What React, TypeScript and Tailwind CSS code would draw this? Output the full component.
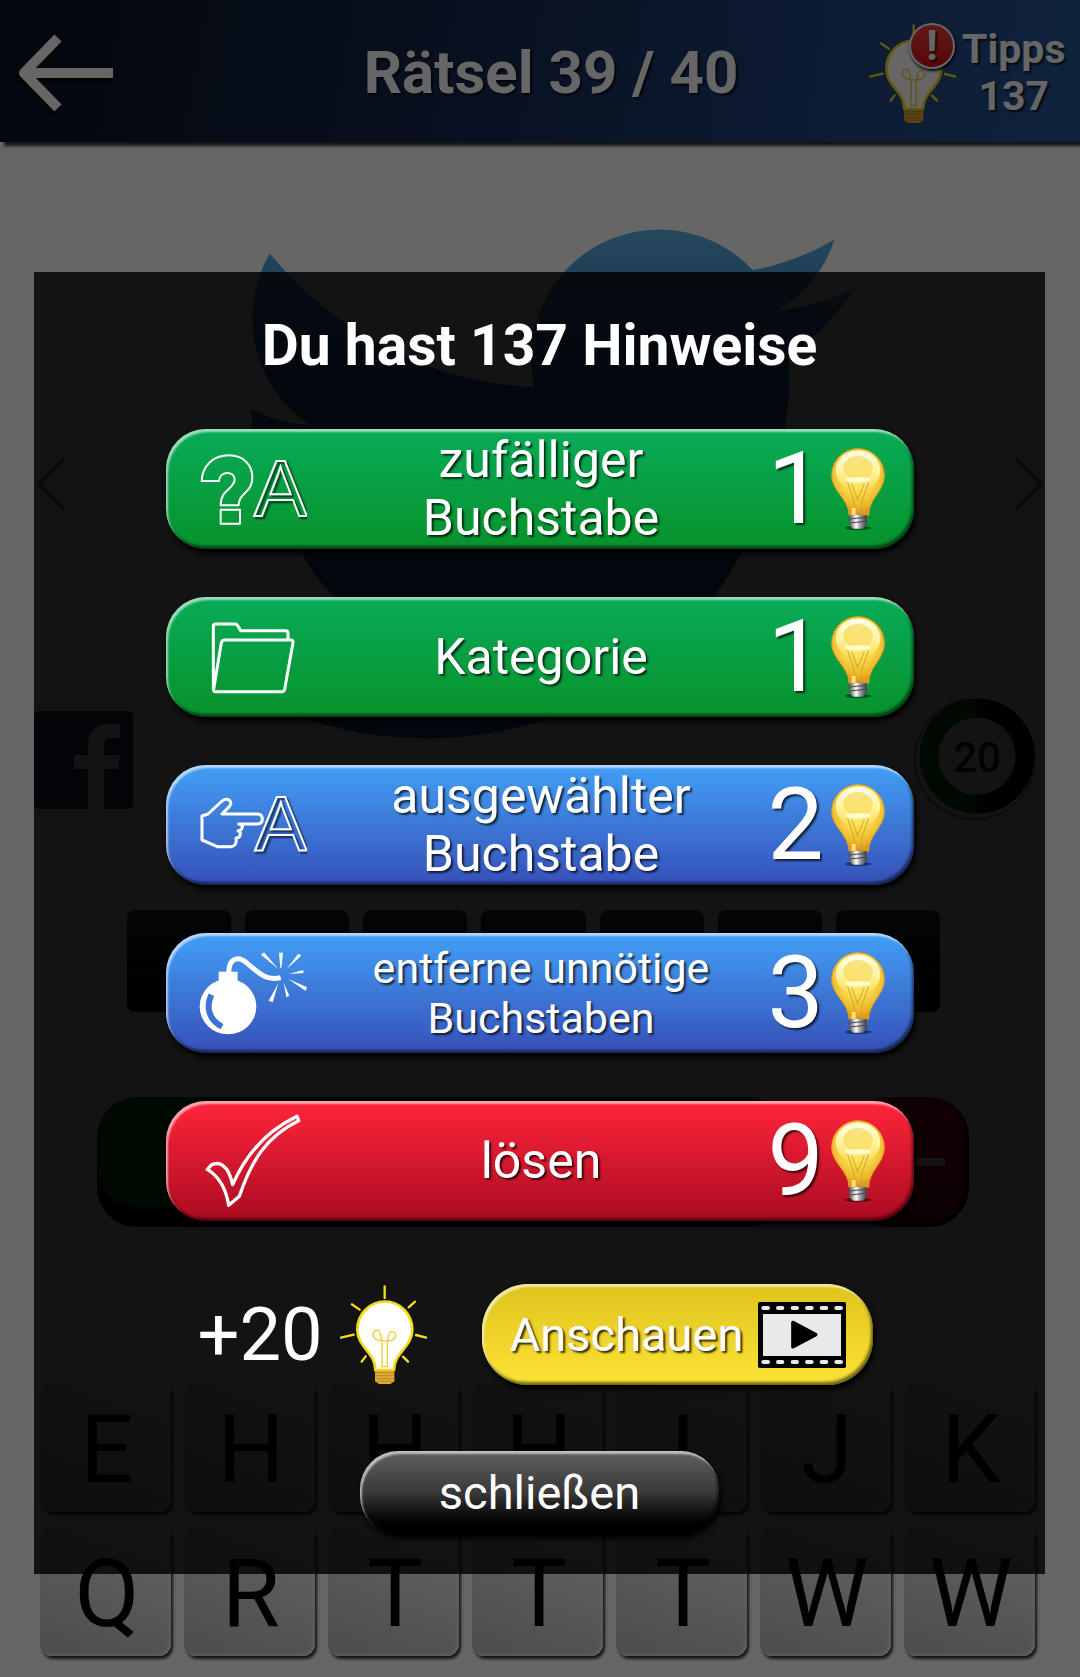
import React, { useId } from 'react';

type Tone = 'green' | 'blue' | 'red';

interface Hint {
  label: string[];
  cost: number;
  tone: Tone;
  small?: boolean;
  icon: React.ReactNode;
}

const toneClasses: Record<Tone, string> = {
  green: 'from-[#09ab57] to-[#08922a]',
  blue: 'from-[#429ff5] to-[#3650b8]',
  red: 'from-[#ff253b] to-[#ab0b21]',
};

const bevel =
  'shadow-[inset_2px_3px_2px_rgba(255,255,255,0.6),inset_-2px_-3px_3px_rgba(0,0,0,0.55),2px_4px_5px_#000]';

const RandomLetterIcon = () => (
  <svg viewBox="147 87 324 300" className="h-[100px] w-[108px]" fill="none" stroke="white" strokeWidth="6" strokeLinejoin="round" aria-hidden="true">
    <path d="M155 213c2-48 36-77 82-77 44 0 70 30 70 66 0 48-40 44-41 84h-54c0-50 42-48 42-78 0-26-46-26-47 5z" />
    <path d="M212 299h58v42h-58z" />
    <text x="312" y="317" fontSize="238" fontFamily="Liberation Sans, sans-serif" strokeLinejoin="miter">A</text>
  </svg>
);

const FolderIcon = () => (
  <svg viewBox="147 591 324 300" className="h-[100px] w-[108px]" fill="none" stroke="white" strokeWidth="9" strokeLinejoin="round" aria-hidden="true">
    <path d="M190 838V648q0-6 6-6h60q4 0 6 4l10 16h134q8 0 8 8v20" />
    <path d="M224 690h198q8 0 7 8l-25 140q-2 7-8 7H196q-6 0-5-7l23-140q2-8 10-8z" />
  </svg>
);

const PickLetterIcon = () => (
  <svg viewBox="147 75 324 300" className="h-[100px] w-[108px]" fill="none" stroke="white" strokeWidth="9" strokeLinejoin="round" aria-hidden="true">
    <path d="M156 198l18-6 42-39q12-9 22-3 9 9 0 20l-22 22h106q15 1 15 15t-15 15h-56q16 4 10 12-2 8-12 8 10 6 6 14-2 8-12 8 4 26-18 26h-38l-46-20z" />
    <text x="314" y="304" fontSize="234" fontFamily="Liberation Sans, sans-serif" strokeWidth="6" strokeLinejoin="miter">A</text>
  </svg>
);

const BombIcon = () => (
  <svg viewBox="147 579 324 300" className="h-[100px] w-[108px]" fill="white" aria-hidden="true">
    <ellipse cx="234" cy="770" rx="85" ry="83" />
    <path d="M206 665h57v40h-57z" />
    <path d="M236 668c2-52 34-48 58-26 34 30 60 52 98 41" fill="none" stroke="white" strokeWidth="15" />
    <path d="M184 734c-16 34-10 74 32 96" fill="none" stroke="#3b73d8" strokeWidth="18" />
    <path d="M333 614l9-7 42 49zM387 608h12l-5 46h-3zM445 611l9 6-44 40zM459 660l2 9-44 3zM471 712l-4 11-53-37zM356 752l12 5 17-57zM418 737l-9 5-8-44z" />
  </svg>
);

const CheckIcon = () => (
  <svg viewBox="57 63 324 300" className="h-[100px] w-[108px]" fill="none" stroke="white" strokeWidth="10" strokeLinejoin="round" aria-hidden="true">
    <path d="M82 238l12-13q26-14 46 13 10 14 18 46 62-142 193-205l5 13c-96 46-142 120-178 227l-32 27c-9-58-31-88-64-108z" />
  </svg>
);

const PriceBulb = () => {
  const id = useId();
  return (
    <svg viewBox="390 110 162 246" className="h-[82px] w-[54px]" aria-hidden="true">
      <defs>
        <radialGradient id={`${id}g`} cx="50%" cy="34%" r="62%">
          <stop offset="0" stopColor="#fbe96a" />
          <stop offset="0.55" stopColor="#f8d648" />
          <stop offset="0.85" stopColor="#eeb72c" />
          <stop offset="1" stopColor="#dd9a1c" />
        </radialGradient>
        <linearGradient id={`${id}h`} x1="0" y1="0" x2="0" y2="1">
          <stop offset="0" stopColor="#fffff4" />
          <stop offset="0.5" stopColor="#fff3a0" />
          <stop offset="1" stopColor="#fff3a0" stopOpacity="0.1" />
        </linearGradient>
        <linearGradient id={`${id}m`}>
          <stop offset="0" stopColor="#55555c" />
          <stop offset="0.4" stopColor="#ffffff" />
          <stop offset="0.65" stopColor="#96969c" />
          <stop offset="1" stopColor="#3f3f45" />
        </linearGradient>
      </defs>
      <ellipse cx="471" cy="350" rx="40" ry="6" fill="#000" opacity="0.45" />
      <path d="M444 312C444 262 392 240 392 192a79 80 0 0 1 158 0c0 48-47 70-47 120z" fill={`url(#${id}g)`} stroke="#e09a22" strokeWidth="3" />
      <ellipse cx="471" cy="178" rx="67" ry="60" fill={`url(#${id}h)`} />
      <ellipse cx="471" cy="170" rx="45" ry="36" fill="#f7dc60" opacity="0.75" />
      <ellipse cx="471" cy="205" rx="38" ry="8" fill="#fffbc8" />
      <path d="M440 214l20 58v34M502 214l-20 58v34M452 218l18 46 20-46" fill="none" stroke="#d3a428" strokeWidth="3" />
      <path d="M452 290h12v20h-12z" fill="#fbe27a" />
      <path d="M445 311h52v30l-12 11h-28l-12-11z" fill={`url(#${id}m)`} />
      <path d="M445 323l52-5M445 335l52-5" stroke="#47474d" strokeWidth="3" />
    </svg>
  );
};

const GlowBulb = () => (
  <svg viewBox="480 588 261 297" className="h-[99px] w-[87px]" fill="none" strokeLinecap="round" aria-hidden="true">
    <path
      d="M614 592v35M516 646l23 16M705 638l-19 17M483 746l38-9M708 738l31 8M545 818l12-16M669 803l15 15"
      stroke="#f5df1e"
      strokeWidth="7"
    />
    <path d="M586 843C586 790 532 775 532 722a82 84 0 0 1 165 0c0 53-55 68-55 121z" fill="#fff" stroke="#f3d91a" strokeWidth="8" />
    <path d="M606 833v-78c-26 0-34-20-20-30 14-6 18 14 18 28q10 6 20 0c0-22 8-30 20-22 10 14-6 26-22 24v78z" stroke="#eecb3a" strokeWidth="4" />
    <path d="M585 845h58v32l-12 8h-34l-12-8z" fill="#e0ab35" />
    <path d="M587 851h54M587 860h54M587 869h54M592 877h44" stroke="#a87a1c" strokeWidth="2" />
  </svg>
);

const FilmIcon = () => (
  <svg viewBox="864 96 264 198" className="h-[66px] w-[88px]" aria-hidden="true">
    <rect x="864" y="96" width="264" height="198" rx="5" fill="#000" />
    <path d="M879 132h234v126H879z" fill="#e9e9e9" />
    <path d="M880 114h14M924 114h13M968 114h13M1011 114h14M1055 114h14M1099 114h14M880 276h14M924 276h13M968 276h13M1011 276h14M1055 276h14M1099 276h14" stroke="#e9e9e9" strokeWidth="12" strokeLinecap="round" />
    <path d="M969 158v72l68-36z" fill="#000" stroke="#000" strokeWidth="11" strokeLinejoin="round" />
  </svg>
);

const hints: Hint[] = [
  { label: ['zufälliger', 'Buchstabe'], cost: 1, tone: 'green', icon: <RandomLetterIcon /> },
  { label: ['Kategorie'], cost: 1, tone: 'green', icon: <FolderIcon /> },
  { label: ['ausgewählter', 'Buchstabe'], cost: 2, tone: 'blue', icon: <PickLetterIcon /> },
  { label: ['entferne unnötige', 'Buchstaben'], cost: 3, tone: 'blue', small: true, icon: <BombIcon /> },
  { label: ['lösen'], cost: 9, tone: 'red', icon: <CheckIcon /> },
];

const letters = ['E', 'H', 'H', 'H', 'I', 'J', 'K', 'Q', 'R', 'T', 'T', 'T', 'W', 'W'];

const Header = () => (
  <header className="flex h-[142px] items-center bg-linear-100 from-[#091220] via-[#18305c] to-[#28589a] pt-1 text-white shadow-[4px_4px_3px_rgba(0,0,0,0.8)] [text-shadow:2px_2px_2px_rgba(0,0,0,0.7)]">
    <div className="w-[233px] shrink-0 pl-[18px]">
      <button type="button" aria-label="Zurück" className="block">
        <svg viewBox="0 0 96 78" className="h-[78px] w-24 drop-shadow-[-1px_3px_1px_#000]" fill="none" stroke="white" aria-hidden="true">
          <path d="M40 4L6 39l34 35" strokeWidth="10" strokeLinejoin="round" />
          <path d="M8 39h87" strokeWidth="10" />
        </svg>
      </button>
    </div>
    <h1 className="flex-1 text-center text-[60px] leading-[64px] font-bold">Rätsel 39 / 40</h1>
    <button type="button" className="flex w-[211px] shrink-0 items-center gap-[6px] [text-shadow:inherit]">
      <span className="relative">
        <GlowBulb />
        <span className="absolute -top-px left-10 flex size-[46px] items-center justify-center rounded-full border-2 border-white bg-linear-to-b from-[#f04040] to-[#d60c10] text-[42px] leading-none font-bold shadow-[1px_2px_3px_#000]">
          !
        </span>
      </span>
      <span className="text-center text-[41px] leading-[47px] font-bold">
        Tipps
        <br />
        137
      </span>
    </button>
  </header>
);

const Game = () => (
  <main className="pb-[21px]">
    <div className="mt-[81px] flex items-center justify-between px-[35px]">
      <svg viewBox="0 0 32 56" className="h-14 w-8" fill="none" stroke="#999" strokeWidth="4" aria-hidden="true">
        <path d="M30 2L4 28l26 26" />
      </svg>
      <svg viewBox="0 2 24 20" className="h-[522px] w-[626px]" aria-hidden="true">
        <defs>
          <linearGradient id="bird" x1="0" y1="0" x2="0" y2="1">
            <stop offset="0" stopColor="#5fb6ea" />
            <stop offset="0.3" stopColor="#2a6cb8" />
            <stop offset="1" stopColor="#1d62c0" />
          </linearGradient>
        </defs>
        <path
          fill="url(#bird)"
          d="M23.953 4.57a10 10 0 01-2.825.775 4.958 4.958 0 002.163-2.723c-.951.555-2.005.959-3.127 1.184a4.92 4.92 0 00-8.384 4.482C7.69 8.095 4.067 6.13 1.64 3.162a4.822 4.822 0 00-.666 2.475c0 1.71.87 3.213 2.188 4.096a4.904 4.904 0 01-2.228-.616v.06a4.923 4.923 0 003.946 4.827 4.996 4.996 0 01-2.212.085 4.936 4.936 0 004.604 3.417 9.867 9.867 0 01-6.102 2.105c-.39 0-.779-.023-1.17-.067a13.995 13.995 0 007.557 2.209c9.053 0 13.998-7.496 13.998-13.985 0-.21 0-.42-.015-.63A9.935 9.935 0 0024 4.59z"
        />
      </svg>
      <svg viewBox="0 0 32 56" className="h-14 w-8" fill="none" stroke="#999" strokeWidth="4" aria-hidden="true">
        <path d="M2 2l26 26L2 54" />
      </svg>
    </div>

    <div className="-mt-[47px] flex items-center justify-between pr-[43px] pl-[34px]">
      <svg viewBox="0 0 99 98" className="h-[98px] w-[99px]" aria-hidden="true">
        <rect width="99" height="98" rx="5" fill="#1c3f6c" />
        <path fill="#fff" d="M54 98V58H40V44h14V34c0-14 8-21 21-21h11v14h-8c-7 0-8 4-8 8v9h16l-2 14H70v40z" />
      </svg>
      <svg viewBox="0 0 124 124" className="size-[124px]" fill="none" aria-hidden="true">
        <circle cx="62" cy="61" r="60" stroke="#999" strokeWidth="2" />
        <path d="M64 106a48 48 0 0 1 0-96" stroke="#087a18" strokeWidth="19" />
        <path d="M64 10a48 48 0 0 1 0 96" stroke="#000" strokeWidth="19" />
        <text x="64" y="74" textAnchor="middle" fontSize="42" fontWeight="500" fill="#222">20</text>
      </svg>
    </div>

    <div className="mt-[88px] grid grid-cols-7 gap-[14px] pr-[140px] pl-[127px]">
      {Array.from({ length: 7 }, (_, i) => (
        <div key={i} className="h-[102px] rounded-lg bg-linear-to-b from-[#40505f] to-black" />
      ))}
    </div>

    <div className="mt-[85px] flex justify-between pr-[111px] pl-[97px]">
      <div className="h-[130px] w-[690px] rounded-[40px] bg-[#08801a] shadow-[inset_0_-20px_2px_#000]" />
      <div className="flex h-[130px] w-[120px] items-center justify-end rounded-[40px] bg-linear-to-b from-[#e00030] to-[#a00020] pr-6 shadow-[inset_-3px_-3px_4px_#000]">
        <span className="h-2 w-[30px] bg-white" />
      </div>
    </div>

    <div className="mt-[154px] grid grid-cols-7 gap-[13px] pr-[45px] pl-10">
      {letters.map((letter, i) => (
        <button
          key={i}
          type="button"
          className="h-[131px] rounded-xl bg-linear-20 from-[#c2bbbb] via-[#dedada] to-white pt-2 pl-[3px] text-center text-[94px] leading-[123px] text-black shadow-[inset_-2px_-2px_2px_rgba(255,255,255,0.5),2px_3px_3px_rgba(0,0,0,0.8)]"
        >
          {letter}
        </button>
      ))}
    </div>
  </main>
);

const HintButton: React.FC<{ hint: Hint }> = ({ hint }) => (
  <button
    type="button"
    className={`flex h-[120px] w-full items-center rounded-[40px] bg-linear-to-b pr-[29px] pl-[33px] text-white [text-shadow:2px_2px_2px_rgba(0,0,0,0.7)] ${bevel} ${toneClasses[hint.tone]}`}
  >
    {hint.icon}
    <span className={hint.small ? 'flex-1 pl-2 text-[43px] leading-[50px]' : 'flex-1 pl-2 text-[50px] leading-[58px]'}>
      {hint.label.map((line) => (
        <span key={line} className="block">
          {line}
        </span>
      ))}
    </span>
    <span className="w-[63px] text-left text-[100px] leading-[120px]">{hint.cost}</span>
    <PriceBulb />
  </button>
);

const HintDialog = () => (
  <section
    role="dialog"
    aria-labelledby="hint-title"
    className="mt-[272px] mr-[35px] ml-[34px] bg-black/81 pt-[42px] pb-10 text-white"
  >
    <h2 id="hint-title" className="text-center text-[57px] leading-[64px] font-bold">
      Du hast 137 Hinweise
    </h2>
    <div className="mx-auto mt-[51px] flex max-w-[748px] flex-col gap-12">
      {hints.map((hint) => (
        <HintButton key={hint.label.join(' ')} hint={hint} />
      ))}
    </div>
    <div className="mx-auto mt-[63px] flex max-w-[748px] items-center pl-8">
      <span className="text-[74px] leading-[80px]">+20</span>
      <span className="mr-[55px] ml-[17px]">
        <GlowBulb />
      </span>
      <button
        type="button"
        className={`flex h-[101px] w-[391px] items-center justify-between rounded-[46px] bg-linear-to-b from-[#dec31c] to-[#fde336] pr-[27px] pl-7 text-[47px] leading-[54px] [text-shadow:2px_2px_2px_rgba(0,0,0,0.8)] ${bevel}`}
      >
        Anschauen
        <FilmIcon />
      </button>
    </div>
    <button
      type="button"
      className={`mx-auto mt-[66px] block h-[83px] w-[359px] rounded-[38px] bg-linear-to-b from-[#626061] via-[#3a3939] to-black text-[47px] leading-[80px] ${bevel}`}
    >
      schließen
    </button>
  </section>
);

const App: React.FC = () => (
  <div className="relative min-h-screen bg-white font-[Roboto,sans-serif]">
    <Header />
    <Game />
    <div className="absolute inset-0 bg-black/60">
      <div className="flow-root">
        <HintDialog />
      </div>
    </div>
  </div>
);

export default App;
